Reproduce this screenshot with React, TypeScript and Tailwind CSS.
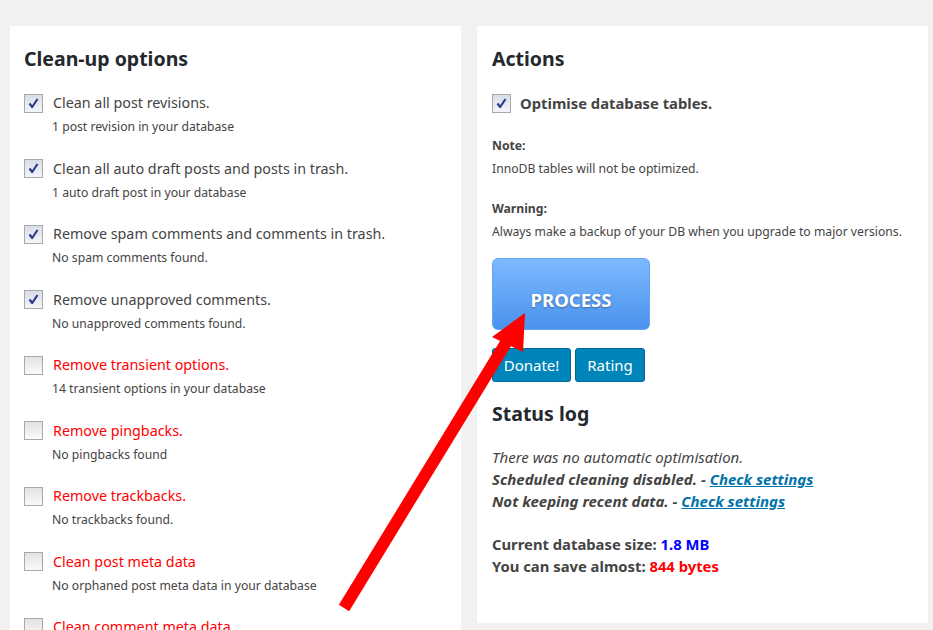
import React from 'react'

const font = { fontFamily: '"Noto Sans", "Open Sans", Arial, sans-serif' }

type Item = { label: string; note: string; checked: boolean }

const items: Item[] = [
  { label: 'Clean all post revisions.', note: '1 post revision in your database', checked: true },
  { label: 'Clean all auto draft posts and posts in trash.', note: '1 auto draft post in your database', checked: true },
  { label: 'Remove spam comments and comments in trash.', note: 'No spam comments found.', checked: true },
  { label: 'Remove unapproved comments.', note: 'No unapproved comments found.', checked: true },
  { label: 'Remove transient options.', note: '14 transient options in your database', checked: false },
  { label: 'Remove pingbacks.', note: 'No pingbacks found', checked: false },
  { label: 'Remove trackbacks.', note: 'No trackbacks found.', checked: false },
  { label: 'Clean post meta data', note: 'No orphaned post meta data in your database', checked: false },
  { label: 'Clean comment meta data', note: 'No orphaned comment meta data in your database', checked: false },
]

function Checkbox({ checked }: { checked: boolean }) {
  return (
    <span
      className={`flex h-[19px] w-[19px] shrink-0 items-center justify-center border border-[#a9a9a9] bg-gradient-to-b ${
        checked ? 'from-[#d9dde8] to-[#f4f5f9]' : 'from-[#e2e2e2] to-[#fafafa]'
      }`}
    >
      {checked && (
        <svg width="13" height="13" viewBox="0 0 13 13">
          <path d="M2.5 6.5 L5.2 10 L10.5 2" fill="none" stroke="#2a3d8f" strokeWidth="2.2" strokeLinejoin="round" />
        </svg>
      )}
    </span>
  )
}

export default function App() {
  return (
    <div className="relative h-[630px] w-[933px] overflow-hidden bg-[#f1f1f1]" style={font}>
      <div className="flex gap-4 pl-[10px] pt-[26px]">
        {/* Clean-up options */}
        <section className="w-[451px] shrink-0 bg-white px-[14px] pt-[19px] pb-10">
          <h2 className="text-[19.5px] font-bold leading-[28px] text-[#23282d]">Clean-up options</h2>
          <div className="mt-[19px]">
            {items.map((it) => (
              <div key={it.label} className="h-[65.5px]">
                <div className="flex items-center gap-[10px]">
                  <Checkbox checked={it.checked} />
                  <span className={`text-[14.3px] leading-[22px] ${it.checked ? 'text-[#444]' : 'text-[#f00]'}`}>
                    {it.label}
                  </span>
                </div>
                <p className="mt-[3px] pl-[28px] text-[12.2px] leading-[20px] text-[#444]">{it.note}</p>
              </div>
            ))}
          </div>
        </section>

        {/* Actions */}
        <section className="h-[597px] w-[451px] shrink-0 bg-white px-[15px] pt-[19px]">
          <h2 className="text-[19.5px] font-bold leading-[28px] text-[#23282d]">Actions</h2>
          <div className="mt-[19px] flex items-center gap-[9px]">
            <Checkbox checked />
            <span className="text-[14.8px] font-bold leading-[22px] text-[#444]">Optimise database tables.</span>
          </div>

          <p className="mt-[22px] text-[12.2px] font-bold leading-[20px] text-[#444]">Note:</p>
          <p className="mt-[3px] text-[12.2px] leading-[20px] text-[#444]">InnoDB tables will not be optimized.</p>
          <p className="mt-[20px] text-[12.2px] font-bold leading-[20px] text-[#444]">Warning:</p>
          <p className="mt-[3px] text-[12.2px] leading-[20px] text-[#444]">
            Always make a backup of your DB when you upgrade to major versions.
          </p>

          <button className="mt-[16px] flex h-[72px] w-[158px] items-center justify-center rounded-[6px] border border-[#62a6f5] bg-gradient-to-b from-[#7cb9ff] to-[#4a92ec] pt-[12px] text-[18.5px] font-bold text-white [text-shadow:0_1px_2px_rgba(0,0,0,0.35)]">
            PROCESS
          </button>

          <div className="mt-[18px] flex gap-[4px]">
            <button className="h-[34px] w-[79px] rounded-[3px] border border-[#006799] bg-[#0085ba] text-[15px] text-white">
              Donate!
            </button>
            <button className="h-[34px] w-[70px] rounded-[3px] border border-[#006799] bg-[#0085ba] text-[15px] text-white">
              Rating
            </button>
          </div>

          <h2 className="mt-[18px] text-[19.5px] font-bold leading-[28px] text-[#23282d]">Status log</h2>

          <div className="mt-[18px] text-[15px] italic leading-[22px] text-[#444]">
            <p>There was no automatic optimisation.</p>
            <p className="font-bold">
              Scheduled cleaning disabled. -{' '}
              <a className="text-[#0073aa] underline">Check settings</a>
            </p>
            <p className="font-bold">
              Not keeping recent data. -{' '}
              <a className="text-[#0073aa] underline">Check settings</a>
            </p>
          </div>

          <div className="mt-[21px] text-[14.8px] font-bold leading-[22px] text-[#444]">
            <p>
              Current database size: <span className="text-[#0000ff]">1.8 MB</span>
            </p>
            <p>
              You can save almost: <span className="text-[#ff0000]">844 bytes</span>
            </p>
          </div>
        </section>
      </div>

      {/* annotation arrow */}
      <svg className="pointer-events-none absolute left-0 top-0" width="933" height="630">
        <line x1="344" y1="608" x2="512" y2="333" stroke="#ff0000" strokeWidth="12" />
        <polygon points="525,313 492,337 523,352" fill="#ff0000" />
      </svg>
    </div>
  )
}
